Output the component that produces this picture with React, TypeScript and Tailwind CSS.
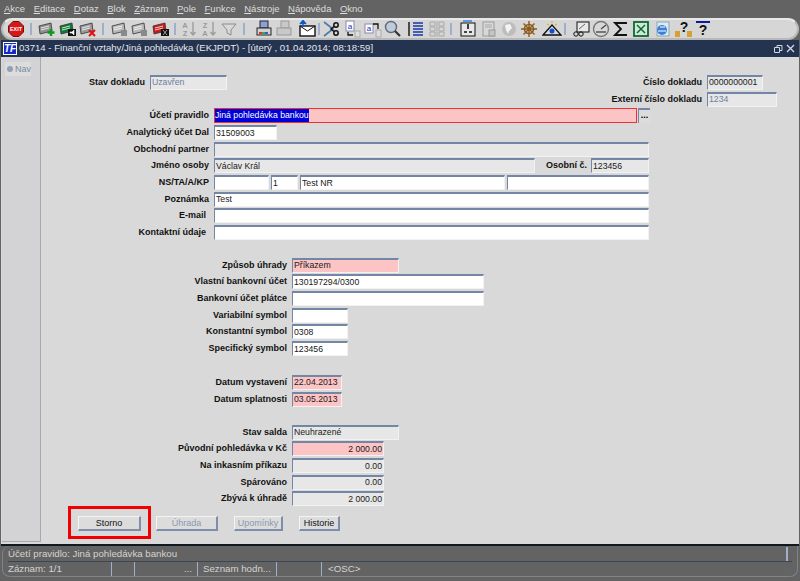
import type { ReactNode } from "react";

const FONT = "font-['Liberation_Sans',Arial,sans-serif]";

const MENU: [string, string][] = [
  ["A", "kce"],
  ["E", "ditace"],
  ["D", "otaz"],
  ["B", "lok"],
  ["Z", "áznam"],
  ["P", "ole"],
  ["F", "unkce"],
  ["N", "ástroje"],
  ["N", "ápověda"],
  ["O", "kno"],
];

function Ico({ children }: { children: ReactNode }) {
  return (
    <svg viewBox="0 0 20 18" className="h-[18px] w-[20px] shrink-0">
      {children}
    </svg>
  );
}

function Sep({ className }: { className: string }) {
  return <span className={`h-[12px] w-[2px] shrink-0 bg-[#9fb0cc] ${className}`} />;
}

function Exit() {
  return (
    <svg viewBox="0 0 16 16" className="h-[16px] w-[16px] shrink-0">
      <polygon points="5,0.5 11,0.5 15.5,5 15.5,11 11,15.5 5,15.5 0.5,11 0.5,5" fill="#d81818" stroke="#701010" />
      <text x="8" y="10" textAnchor="middle" fontSize="5.4" fontWeight="700" fill="#fff" fontFamily="Liberation Sans">
        EXIT
      </text>
    </svg>
  );
}

// the card-like record icons: base colour + small badge
function Card({ fill, badge }: { fill: string; badge: ReactNode }) {
  return (
    <Ico>
      <polygon points="2,6 14,3 15,11 3,14" fill={fill} stroke="#333" strokeWidth="0.8" />
      <path d="M4 8l8-2M4 10l8-2" stroke="#fff" strokeWidth="0.8" />
      {badge}
    </Ico>
  );
}

const plus = <path d="M14 9v7M10.5 12.5h7" stroke="#0a9a1e" strokeWidth="2.4" />;
const cross = <path d="M11 10l6 6M17 10l-6 6" stroke="#e01010" strokeWidth="2" />;
const blackBox = (glyph: string) => (
  <>
    <rect x="10" y="9" width="8" height="7" fill="#111" />
    <path d={glyph} fill="#fff" stroke="#fff" strokeWidth="0.6" />
  </>
);

function Sort({ up }: { up: boolean }) {
  return (
    <Ico>
      <text x="6" y="8" textAnchor="middle" fontSize="7.5" fontWeight="700" fill="#9a9a9a" fontFamily="Liberation Sans">
        {up ? "A" : "Z"}
      </text>
      <text x="6" y="16" textAnchor="middle" fontSize="7.5" fontWeight="700" fill="#9a9a9a" fontFamily="Liberation Sans">
        {up ? "Z" : "A"}
      </text>
      <path d="M14 2v13M11.5 12l2.5 3 2.5-3" fill="none" stroke="#9a9a9a" strokeWidth="1.3" />
    </Ico>
  );
}

function Toolbar() {
  return (
    <div className="flex h-[22px] items-center rounded-full border-2 border-[#b8b8b8] border-t-[#e8e8e8] bg-[#d6d6d6] pl-[5px]">
      <Exit />
      <Sep className="ml-[6px] mr-[5px]" />
      <Card fill="#8f8f8f" badge={plus} />
      <span className="w-px" />
      <Card fill="#0f7a34" badge={blackBox("M12 12h2l2-2v5l-2-2h-2z")} />
      <Card fill="#9a9a9a" badge={cross} />
      <Sep className="ml-[4px] mr-[6px]" />
      <Card fill="#b8b8b8" badge={<rect x="11" y="10" width="6" height="6" fill="#8a8a8a" />} />
      <Card fill="#b8b8b8" badge={<rect x="11" y="10" width="6" height="6" fill="#8a8a8a" />} />
      <span className="w-px" />
      <Card fill="#cc1818" badge={blackBox("M12 10l4 5M16 10l-4 5")} />
      <Sep className="ml-[3px] mr-[3px]" />
      <Sort up />
      <Sort up={false} />
      <Ico>
        <path d="M3 4h14l-5 6v5l-4-2v-3z" fill="#d8d8d8" stroke="#8c8c8c" />
      </Ico>
      <Sep className="ml-[4px] mr-[9px]" />
      {/* print */}
      <Ico>
        <rect x="6" y="1" width="8" height="7" fill="#8ea0d0" stroke="#223" />
        <rect x="3" y="8" width="14" height="7" fill="#d0d0d0" stroke="#222" />
        <path d="M5 13h3" stroke="#d01010" strokeWidth="1.6" />
        <path d="M8 13h3" stroke="#10a020" strokeWidth="1.6" />
        <path d="M11 13h3" stroke="#1040d0" strokeWidth="1.6" />
      </Ico>
      <Ico>
        <rect x="7" y="1" width="8" height="7" fill="#c8c8c8" stroke="#999" />
        <rect x="3" y="8" width="14" height="7" fill="#c8c8c8" stroke="#999" />
      </Ico>
      <span className="w-[3px]" />
      {/* mail */}
      <Ico>
        <rect x="3" y="6" width="15" height="10" fill="#fff" stroke="#111" strokeWidth="1.4" />
        <path d="M3 6l7.5 5L18 6" fill="none" stroke="#111" />
        <path d="M6 1v6M3 4l3-3.5L9 4" fill="#0a5ac8" stroke="#0a5ac8" strokeWidth="1.4" />
      </Ico>
      <Sep className="ml-[1px] mr-[2px]" />
      {/* cut */}
      <Ico>
        <path d="M2 2l9 7-9 7" fill="none" stroke="#4a7aa8" strokeWidth="1.6" />
        <circle cx="14" cy="5" r="2.2" fill="none" stroke="#111" strokeWidth="1.5" />
        <circle cx="14" cy="13" r="2.2" fill="none" stroke="#111" strokeWidth="1.5" />
        <path d="M12 6.5l-3 2.5 3 2.5" fill="none" stroke="#111" strokeWidth="1.5" />
      </Ico>
      {/* copy */}
      <Ico>
        <rect x="4" y="1" width="8" height="10" fill="#fff" stroke="#88a" />
        <text x="8" y="9" textAnchor="middle" fontSize="8" fill="#1030c0" fontFamily="Liberation Sans">
          a
        </text>
        <rect x="13" y="11" width="5" height="6" fill="#ddd" stroke="#aaa" />
        <path d="M6 12v3h5" fill="none" stroke="#111" strokeWidth="1.3" />
      </Ico>
      <span className="w-px" />
      {/* paste */}
      <Ico>
        <rect x="2" y="4" width="8" height="9" fill="#fff" stroke="#88a" />
        <text x="6" y="11" textAnchor="middle" fontSize="8" fill="#1030c0" fontFamily="Liberation Sans">
          a
        </text>
        <rect x="13" y="10" width="5" height="7" fill="#ddd" stroke="#aaa" />
        <path d="M10 4h5v5" fill="none" stroke="#111" strokeWidth="1.3" />
      </Ico>
      {/* search */}
      <Ico>
        <circle cx="8" cy="7" r="5.5" fill="#bcd" stroke="#667" strokeWidth="1.4" />
        <path d="M12 11l5 5" stroke="#333" strokeWidth="2.2" />
      </Ico>
      <span className="w-[3px]" />
      <Ico>
        <path d="M3 2v14" stroke="#111" strokeWidth="1.4" />
        <path d="M7 3h10M7 6h10M7 9h10M7 12h10M7 15h10" stroke="#1838a8" strokeWidth="1.6" />
      </Ico>
      <span className="w-px" />
      <Ico>
        <path d="M3 2h5v4H3zM3 7h5v4H3zM3 12h5v4H3zM12 2h5v4h-5zM12 7h5v4h-5zM12 12h5v4h-5z" fill="none" stroke="#a8a8a8" />
        <path d="M10 1v16" stroke="#a8a8a8" />
      </Ico>
      <Sep className="ml-[3px] mr-[6px]" />
      <Ico>
        <rect x="3" y="3" width="14" height="13" fill="#e8e8e8" stroke="#111" />
        <path d="M5 1h9" stroke="#5a9ad8" strokeWidth="2" />
        <path d="M10 4v5M6 12h3M11 12h3" stroke="#111" strokeWidth="1.6" />
      </Ico>
      <span className="w-px" />
      <Ico>
        <rect x="4" y="2" width="11" height="14" fill="#d8d8d8" stroke="#9a9a9a" />
        <path d="M6 5h7M6 7h7" stroke="#aaa" />
        <rect x="10" y="10" width="6" height="6" fill="#c4c4c4" stroke="#9a9a9a" />
      </Ico>
      <Ico>
        <circle cx="10" cy="9" r="7" fill="#bdbdbd" />
        <path d="M6 5l5-1 2 4-3 3-1 3-2-4z" fill="#f4f4f4" />
      </Ico>
      <Ico>
        <circle cx="10" cy="9" r="4.5" fill="none" stroke="#8a5a18" strokeWidth="1.6" />
        <path d="M10 1v16M2 9h16M4.5 3.5l11 11M15.5 3.5l-11 11" stroke="#8a5a18" strokeWidth="1.4" />
      </Ico>
      <span className="w-[3px]" />
      <Ico>
        <path d="M1 15L10 5l9 10z" fill="#d8d8d8" stroke="#111" strokeWidth="1.3" />
        <circle cx="10" cy="11" r="2.5" fill="#1050d0" />
        <path d="M5 4l2 1M15 4l-2 1M10 1v2" stroke="#d8b820" strokeWidth="1.3" />
      </Ico>
      <Sep className="ml-[2px] mr-[5px]" />
      <Ico>
        <rect x="6" y="2" width="12" height="10" fill="#e8e8e8" stroke="#111" />
        <circle cx="5" cy="14" r="2.2" fill="none" stroke="#111" />
        <circle cx="10" cy="14" r="2.2" fill="none" stroke="#111" />
        <path d="M8 9l6-5" stroke="#666" />
      </Ico>
      <Ico>
        <circle cx="10" cy="9" r="7.5" fill="#d8d8d8" stroke="#777" strokeWidth="1.4" />
        <path d="M10 9l5-4" stroke="#444" strokeWidth="1.3" />
        <path d="M5 12h10" stroke="#555" strokeWidth="1.5" />
      </Ico>
      <Ico>
        <path d="M16 3H4l6 6-6 6h12" fill="none" stroke="#111" strokeWidth="1.8" />
      </Ico>
      <Ico>
        <rect x="3" y="2" width="14" height="14" fill="#d0e8d8" stroke="#0a6a30" strokeWidth="1.8" />
        <path d="M6 5l8 8M14 5l-8 8" stroke="#0a6a30" strokeWidth="1.5" />
      </Ico>
      <span className="w-[2px]" />
      <Ico>
        <rect x="4" y="2" width="12" height="14" fill="#dfe8f4" stroke="#8aa" />
        <circle cx="9" cy="10" r="5" fill="#3a80d8" />
        <path d="M5 11h8M7 7h5" stroke="#fff" />
      </Ico>
      <Ico>
        <text x="11" y="12" textAnchor="middle" fontSize="14" fontWeight="700" fill="#111" fontFamily="Liberation Sans">
          ?
        </text>
        <rect x="2" y="11" width="5" height="6" fill="#d8a030" />
        <rect x="14" y="11" width="5" height="6" fill="#d8a030" />
      </Ico>
      <Ico>
        <path d="M3 1h14v2H3z" fill="#1018a0" />
        <text x="10" y="15" textAnchor="middle" fontSize="14" fontWeight="700" fill="#111" fontFamily="Liberation Sans">
          ?
        </text>
      </Ico>
    </div>
  );
}

type FieldTone = "white" | "grey" | "pink";

function Field({
  value = "",
  tone = "white",
  width,
  muted,
  right,
}: {
  value?: string;
  tone?: FieldTone;
  width: string;
  muted?: boolean;
  right?: boolean;
}) {
  const bg = tone === "white" ? "bg-white" : tone === "pink" ? "bg-[#fcc4c4]" : "bg-[#e7e7e7]";
  return (
    <div
      className={`flex h-[15px] shrink-0 items-center overflow-hidden whitespace-nowrap border-t-2 border-l border-t-[#7486a6] border-l-[#7486a6] border-r border-b border-r-[#f2f2f2] border-b-[#f2f2f2] pl-px pr-px text-[8.7px] leading-none ${bg} ${width} ${muted ? "text-[#6c7f9c]" : "text-[#202020]"} ${right ? "justify-end" : ""}`}
    >
      {value}
    </div>
  );
}

function Row({ label, labelWidth, pad = "", children }: { label: string; labelWidth: string; pad?: string; children: ReactNode }) {
  return (
    <div className="flex h-[16.7px] items-center">
      <div className={`shrink-0 text-right text-[9px] font-bold leading-none text-[#111] ${labelWidth} ${pad}`}>{label}</div>
      <div className="ml-[5px] flex items-center gap-[2px]">{children}</div>
    </div>
  );
}

function Btn({ label, width, disabled }: { label: string; width: string; disabled?: boolean }) {
  return (
    <div
      className={`flex h-[15px] items-center justify-center border border-[#f4f4f4] border-r-2 border-b-2 border-r-[#7f8ea8] border-b-[#7f8ea8] bg-[#dcdcdc] text-[9px] leading-none ${width} ${disabled ? "text-[#8a9ab0]" : "text-[#111]"}`}
    >
      {label}
    </div>
  );
}

export default function App() {
  const w1 = "w-[168px]"; // upper group label column
  const w2 = "w-[246px]"; // lower group label column
  return (
    <div className={`flex h-[581px] w-[800px] flex-col overflow-hidden bg-[#636363] ${FONT}`}>
      {/* menu */}
      <div className="flex h-[18px] shrink-0 items-center gap-[8.5px] pl-[4px] text-[9.5px] text-[#dcdcdc]">
        {MENU.map(([k, rest], i) => (
          <span key={i} className="whitespace-nowrap">
            <span className="underline">{k}</span>
            {rest}
          </span>
        ))}
      </div>

      <div className="shrink-0 px-[1px]">
        <Toolbar />
      </div>

      {/* window */}
      <div className="mx-[1px] flex min-h-0 flex-1 flex-col border-b-2 border-b-[#101820] bg-[#d9d9d9]">
        <div className="flex h-[17px] shrink-0 items-center bg-[#24334f] pl-[2px] pr-[3px] text-[9.6px] text-[#e4e8ee]">
          <span className="mr-[2px] flex h-[13px] w-[14px] items-center justify-center border border-white bg-[#1428c8] text-[10px] font-bold italic leading-none text-white">
            TF
          </span>
          <span className="whitespace-nowrap">03714 - Finanční vztahy/Jiná pohledávka (EKJPDT) - [úterý , 01.04.2014; 08:18:59]</span>
          <svg viewBox="0 0 24 12" className="ml-auto h-[12px] w-[24px]" fill="none" stroke="#cfd6e0">
            <path d="M2.5 4.5h5v5h-5zM5 4.5V2.5h5v5H7.5" />
            <path d="M15 2l7 7M22 2l-7 7" strokeWidth="1.4" />
          </svg>
        </div>

        <div className="flex min-h-0 flex-1">
          {/* navigator strip */}
          <div className="mb-[2px] ml-[1px] w-[39px] shrink-0 border-r border-r-[#a8a8a8] border-b border-b-[#a8a8a8] bg-[#d3d3d6] pl-[3px] pt-[5px]">
            <div className="flex h-[14px] w-[26px] items-center gap-[2px] bg-[#dcdcdc] pl-[2px] text-[9px] leading-none text-[#7a8aa4]">
              <span className="h-[6px] w-[6px] rounded-full bg-[#8fa0b8]" />
              Nav
            </div>
          </div>

          {/* form */}
          <div className="min-w-0 flex-1 pt-[17px]">
            <div className="flex justify-between pr-[22px]">
              <div>
                <Row label="Stav dokladu" labelWidth="w-[104px]">
                  <Field value="Uzavřen" tone="grey" muted width="w-[77px]" />
                </Row>
              </div>
              <div>
                <Row label="Číslo dokladu" labelWidth="w-[120px]">
                  <Field value="0000000001" tone="grey" width="w-[56px]" />
                </Row>
                <Row label="Externí číslo dokladu" labelWidth="w-[120px]">
                  <Field value="1234" tone="grey" muted width="w-[70px]" />
                </Row>
              </div>
            </div>

            <div>
              <Row label="Účetí pravidlo" labelWidth={w1}>
                <div className="flex h-[15px] w-[423px] items-center border border-[#f03030] bg-[#fcc4c4] text-[8.7px] leading-none">
                  <span className="flex h-full items-center bg-[#0000d8] text-white">Jiná pohledávka bankou</span>
                </div>
                <div className="-ml-[1px] flex h-[15px] w-[12px] items-center justify-center border-t-2 border-l border-[#7486a6] bg-[#dcdcdc] pb-[3px] text-[9px] font-bold leading-none text-black">
                  ...
                </div>
              </Row>
              <Row label="Analytický účet Dal" labelWidth={w1}>
                <Field value="31509003" width="w-[63px]" />
              </Row>
              <Row label="Obchodní partner" labelWidth={w1}>
                <Field tone="grey" width="w-[435px]" />
              </Row>
              <Row label="Jméno osoby" labelWidth={w1}>
                <Field value="Václav Král" tone="grey" width="w-[321px]" />
                <div className="w-[50px] text-right text-[9px] font-bold leading-none text-[#111]">Osobní č.</div>
                <span className="w-0" />
                <Field value="123456" tone="grey" width="w-[58px]" />
              </Row>
              <Row label="NS/TA/A/KP" labelWidth={w1}>
                <Field width="w-[55px]" />
                <Field value="1" width="w-[27px]" />
                <Field value="Test NR" width="w-[205px]" />
                <Field width="w-[142px]" />
              </Row>
              <Row label="Poznámka" labelWidth={w1}>
                <Field value="Test" width="w-[435px]" />
              </Row>
              <Row label="E-mail" labelWidth={w1} pad="pr-[3px]">
                <Field width="w-[435px]" />
              </Row>
              <Row label="Kontaktní údaje" labelWidth={w1} pad="pr-[3px]">
                <Field width="w-[435px]" />
              </Row>
            </div>

            <div className="mt-[16px]">
              <Row label="Způsob úhrady" labelWidth={w2}>
                <Field value="Příkazem" tone="pink" width="w-[107px]" />
              </Row>
              <Row label="Vlastní bankovní účet" labelWidth={w2}>
                <Field value="130197294/0300" width="w-[192px]" />
              </Row>
              <Row label="Bankovní účet plátce" labelWidth={w2}>
                <Field width="w-[192px]" />
              </Row>
              <Row label="Variabilní symbol" labelWidth={w2}>
                <Field width="w-[56px]" />
              </Row>
              <Row label="Konstantní symbol" labelWidth={w2}>
                <Field value="0308" width="w-[56px]" />
              </Row>
              <Row label="Specifický symbol" labelWidth={w2}>
                <Field value="123456" width="w-[56px]" />
              </Row>
            </div>

            <div className="mt-[17px]">
              <Row label="Datum vystavení" labelWidth={w2}>
                <Field value="22.04.2013" tone="pink" width="w-[50px]" />
              </Row>
              <Row label="Datum splatnosti" labelWidth={w2}>
                <Field value="03.05.2013" tone="pink" width="w-[50px]" />
              </Row>
            </div>

            <div className="mt-[16.5px]">
              <Row label="Stav salda" labelWidth={w2}>
                <Field value="Neuhrazené" tone="grey" width="w-[107px]" />
              </Row>
              <Row label="Původní pohledávka v Kč" labelWidth={w2}>
                <Field value="2 000.00" tone="pink" right width="w-[92px]" />
              </Row>
              <Row label="Na inkasním příkazu" labelWidth={w2}>
                <Field value="0.00" tone="grey" right width="w-[92px]" />
              </Row>
              <Row label="Spárováno" labelWidth={w2}>
                <Field value="0.00" tone="grey" right width="w-[92px]" />
              </Row>
              <Row label="Zbývá k úhradě" labelWidth={w2}>
                <Field value="2 000.00" tone="grey" right width="w-[92px]" />
              </Row>
            </div>

            <div className="-mt-[1px] ml-[27px] flex">
              <div className="mr-[5px] flex h-[33px] w-[83px] items-start justify-center border-[3px] border-[#f00000] pt-[7px]">
                <Btn label="Storno" width="w-[63px]" />
              </div>
              <div className="mt-[10px] flex gap-[16px]">
                <Btn label="Úhrada" width="w-[62px]" disabled />
                <Btn label="Upomínky" width="w-[49px]" disabled />
                <Btn label="Historie" width="w-[41px]" />
              </div>
            </div>
          </div>
        </div>
      </div>

      {/* status */}
      <div className="mx-[2px] mb-[4px] shrink-0 rounded-b-lg rounded-l-lg border-b border-l border-r border-[#808488] px-[5px] text-[9.7px] text-[#d4d4d4]">
        <div className="flex h-[16px] items-center border-b border-b-[#3c4650] pt-px">
          Účetí pravidlo: Jiná pohledávka bankou
          <span className="ml-auto mr-[4px] h-full w-[2px] bg-[#9fb0cc]" />
        </div>
        <div className="flex h-[14px] items-center">
          <span className="w-[103px]">Záznam: 1/1</span>
          <span className="h-full w-[23px] border-l border-[#9fb0cc]" />
          <span className="h-full w-[63px] border-l border-[#9fb0cc] pr-[5px] text-right">...</span>
          <span className="h-full w-[79px] border-l border-[#9fb0cc] pl-[5px] leading-[14px]">Seznam hodn...</span>
          <span className="h-full w-[45px] border-l border-[#9fb0cc]" />
          <span className="h-full border-l border-[#9fb0cc] pl-[6px] leading-[14px]">&lt;OSC&gt;</span>
        </div>
      </div>
    </div>
  );
}
